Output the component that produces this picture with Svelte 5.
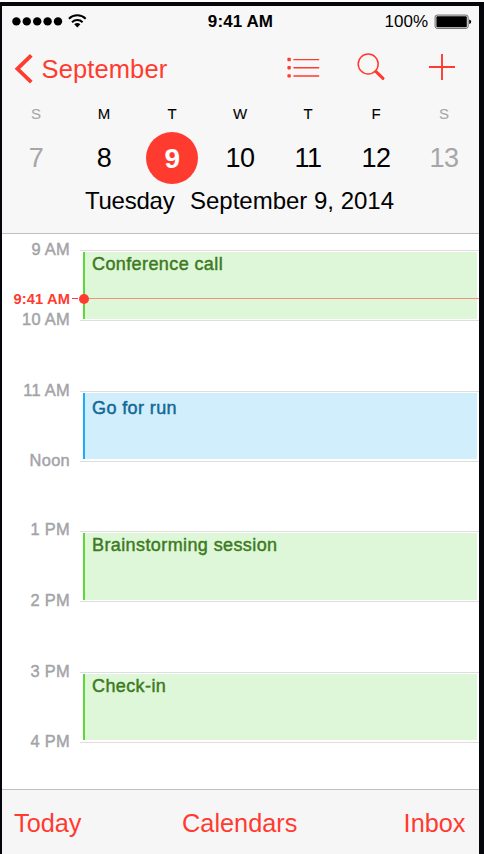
<script>
  const days = [
    { letter: 'S', number: 7, weekend: true },
    { letter: 'M', number: 8 },
    { letter: 'T', number: 9, selected: true },
    { letter: 'W', number: 10 },
    { letter: 'T', number: 11 },
    { letter: 'F', number: 12 },
    { letter: 'S', number: 13, weekend: true }
  ];
  const hours = [
    { label: '9 AM', event: { title: 'Conference call', color: 'green' } },
    { label: '10 AM' },
    { label: '11 AM', event: { title: 'Go for run', color: 'blue' } },
    { label: 'Noon' },
    { label: '1 PM', raised: true, event: { title: 'Brainstorming session', color: 'green' } },
    { label: '2 PM' },
    { label: '3 PM', event: { title: 'Check-in', color: 'green' } },
    { label: '4 PM' }
  ];
</script>

<div class="device">
  <div class="screen">
    <header>
      <div class="status">
        <div class="signal">
          <svg width="78" height="18" viewBox="0 0 78 18">
            {#each [0, 1, 2, 3, 4] as i}
              <circle cx={4.4 + i * 10.4} cy="9.4" r="4.2" />
            {/each}
            <g fill="none" stroke="#000" stroke-width="2">
              <path d="M56.9 6.7a12.2 12.2 0 0 1 16.8 0" />
              <path d="M60 10.2a7.8 7.8 0 0 1 10.6 0" />
            </g>
            <path d="M62.2 12.3a4.8 4.8 0 0 1 6.2 0L65.3 15.4z" />
          </svg>
        </div>
        <div class="clock">9:41 AM</div>
        <div class="power">
          <span>100%</span>
          <svg width="38" height="16" viewBox="0 0 38 16">
            <rect x="1.1" y="1.1" width="33" height="13.3" rx="2" fill="none" stroke="#666" stroke-width="1" />
            <rect x="2.4" y="2.3" width="30.4" height="10.9" rx="1" />
            <path d="M35.2 5.5q2 .6 2 2.3t-2 2.3z" />
          </svg>
        </div>
      </div>

      <nav>
        <div class="back">
          <svg width="20" height="32" viewBox="0 0 20 32">
            <path d="M18.3 2.3 4.4 15.8l13.9 13.4" fill="none" stroke="#ff3b30" stroke-width="3.8" />
          </svg>
          <span>September</span>
        </div>
        <div class="actions">
          <svg width="34" height="32" viewBox="0 0 34 32" fill="#ff3b30">
            <rect x=".4" y="5.8" width="3.4" height="3.4" rx=".8" />
            <rect x=".4" y="14" width="3.4" height="3.4" rx=".8" />
            <rect x=".4" y="22.2" width="3.4" height="3.4" rx=".8" />
            <path d="M6.4 6.9h25.8v1.4H6.4zM6.4 15.1h25.8v1.4H6.4zM6.4 23.3h25.8v1.4H6.4z" />
          </svg>
          <svg width="30" height="32" viewBox="0 0 30 32" fill="none" stroke="#ff3b30">
            <circle cx="11.2" cy="12" r="10" stroke-width="1.5" />
            <path d="m18.4 19 1.4 1.4" stroke-width="1.6" />
            <path d="m19 19.6 7 6.8" stroke-width="3" stroke-linecap="round" />
          </svg>
          <svg width="28" height="32" viewBox="0 0 28 32">
            <path d="M1 15h26M14 2v26" stroke="#ff3b30" stroke-width="1.9" />
          </svg>
        </div>
      </nav>

      <div class="week">
        {#each days as day}
          <div class="day" class:weekend={day.weekend}>
            <span class="letter">{day.letter}</span>
            <span class="number" class:selected={day.selected}>{day.number}</span>
          </div>
        {/each}
      </div>

      <div class="date"><span class="weekday">Tuesday</span><span>September 9, 2014</span></div>
    </header>

    <main>
      {#each hours as hour}
        <div class="hour">
          <div class="label" class:raised={hour.raised}>{hour.label}</div>
          <div class="slot">
            {#if hour.event}
              <div class="event {hour.event.color}">{hour.event.title}</div>
            {/if}
          </div>
        </div>
      {/each}
      <div class="now">
        <span class="time">9:41 AM</span>
        <span class="tick"></span>
        <span class="dot"></span>
        <span class="line"></span>
      </div>
    </main>

    <footer>
      <span>Today</span>
      <span>Calendars</span>
      <span>Inbox</span>
    </footer>
  </div>
</div>

<style>
  :global(body) { margin: 0; background: #fff; }
  .device {
    box-sizing: border-box;
    width: 484px;
    height: 854px;
    padding: 4px 5px 0 2px;
    border-top: 2px solid #fff;
    background: #04060c;
    overflow: hidden;
    font-family: "Liberation Sans", Arial, sans-serif;
    color: #000;
  }
  .screen { width: 477px; height: 848px; display: flex; flex-direction: column; background: #fff; }
  svg { display: block; flex: none; }
  span { white-space: nowrap; }

  header { box-sizing: border-box; height: 228px; background: #f7f7f7; border-bottom: 1px solid #bfbfc1; }
  .status { display: grid; grid-template-columns: 1fr 80px 1fr; height: 32px; align-items: center; font-size: 17px; line-height: 20px; }
  .signal { padding: 0 0 3px 9.5px; }
  .clock { text-align: center; font-weight: bold; letter-spacing: 0.1px; white-space: nowrap; }
  .power { display: flex; justify-content: flex-end; align-items: center; gap: 5.5px; padding-right: 7.5px; }
  .power svg { margin-bottom: 1px; }

  nav { display: flex; justify-content: space-between; height: 61px; color: #ff3b30; }
  .back { display: flex; padding: 15px 0 0 11px; gap: 8.5px; font-size: 25.5px; line-height: 32px; letter-spacing: 0.12px; }
  .actions { display: flex; padding: 14px 23px 0 0; }
  .actions svg:nth-child(2) { margin-left: 36px; }
  .actions svg:nth-child(3) { margin-left: 41px; }

  .week { display: grid; grid-template-columns: repeat(7, 68px); height: 87px; }
  .day { display: flex; flex-direction: column; align-items: center; }
  .letter { font-size: 15px; line-height: 18px; margin-top: 6px; -webkit-text-stroke: 0.1px; }
  .number { width: 52px; height: 52px; margin-top: 9px; line-height: 53px; text-align: center; font-size: 27px; border-radius: 50%; letter-spacing: -0.4px; }
  .weekend { color: #a6a6a8; }
  .selected { background: #ff3b30; color: #fff; font-weight: bold; font-size: 28px; }
  .date { display: flex; gap: 15.5px; padding-left: 83px; font-size: 24px; line-height: 30px; }
  .weekday { letter-spacing: -0.25px; }

  main { position: relative; height: 555px; box-sizing: border-box; padding-top: 16px; overflow: hidden; }
  .hour { display: flex; height: 70.3px; }
  .label { width: 68px; margin-top: -11px; line-height: 20px; height: 20px; text-align: right; font-size: 16.4px; letter-spacing: 0.3px; color: #a3a3a8; -webkit-text-stroke: 0.45px; }
  .raised { margin-top: -12px; }
  .slot { flex: 1; margin-left: 10px; border-top: 1px solid #dedee0; padding: 1px 2px 0 2.5px; }
  .event { box-sizing: border-box; height: 66.5px; padding: 2px 0 0 7.5px; border-left: 2px solid; font-size: 18px; line-height: 21px; letter-spacing: 0.4px; -webkit-text-stroke: 0.45px; }
  .green { background: #def7d8; border-color: #5fd738; color: #3d7a22; }
  .blue { background: #d0eefc; border-color: #1badf8; color: #116896; padding-top: 5px; }

  .now { position: absolute; left: 0; right: 0; top: 54.5px; height: 20px; display: flex; align-items: center; color: #ff3b30; }
  .time { width: 68px; text-align: right; font-weight: bold; font-size: 14.7px; line-height: 20px; letter-spacing: 0.1px; }
  .tick { width: 6px; height: 1.5px; margin-left: 2px; background: #ff3b30; }
  .dot { width: 10px; height: 10px; margin-left: 0.5px; border-radius: 50%; background: #ff3b30; }
  .line { flex: 1; height: 1.4px; background: #f0907e; }

  footer { box-sizing: border-box; flex: 1; display: grid; grid-template-columns: 1fr auto 1fr; border-top: 1px solid #bfbfc1; background: #f7f6f7; color: #ff3b30; padding: 18px 13.5px 0 12px; font-size: 25.3px; line-height: 30px; }
  footer span:last-child { text-align: right; }
</style>
